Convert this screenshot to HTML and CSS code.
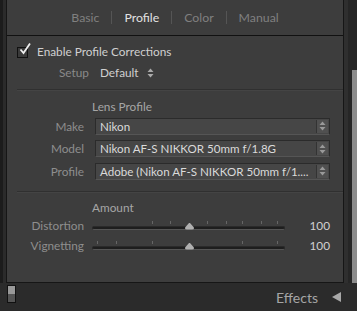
FILE: index.html
```html
<!DOCTYPE html>
<html>
<head>
  <meta charset="UTF-8">
  <title>Lens Corrections</title>
  <link rel="stylesheet" href="styles.css">
</head>
<body>
  <div class="frame">
    <div class="edge"></div>
    <div class="panel">
      <div class="tabs">
        <span class="tab">Basic</span><span class="sep"></span>
        <span class="tab active">Profile</span><span class="sep"></span>
        <span class="tab">Color</span><span class="sep"></span>
        <span class="tab">Manual</span>
      </div>

      <div class="body">
        <label class="check-row">
          <span class="checkbox">
            <svg width="14" height="14" viewBox="0 0 14 14"><path d="M2.5 7.5 L5.5 11 L12 1.5" fill="none" stroke="#eee" stroke-width="1.8"/></svg>
          </span>
          Enable Profile Corrections
        </label>

        <div class="setup-row">
          <span class="dim">Setup</span>
          <span class="setup-value">Default</span>
          <svg class="updown" width="7" height="10" viewBox="0 0 7 10"><path d="M3.5 0.5 L6.5 4 L0.5 4 Z M3.5 9.5 L6.5 6 L0.5 6 Z" fill="#aaa"/></svg>
        </div>

        <div class="divider"></div>

        <!-- Lens Profile -->
        <div class="group-title">Lens Profile</div>
        <div class="field">
          <span class="label">Make</span>
          <div class="select"><span class="select-text">Nikon</span><span class="stepper"><svg width="7" height="10" viewBox="0 0 7 10"><path d="M3.5 0.5 L6.5 4 L0.5 4 Z M3.5 9.5 L6.5 6 L0.5 6 Z" fill="#999"/></svg></span></div>
        </div>
        <div class="field">
          <span class="label">Model</span>
          <div class="select"><span class="select-text">Nikon AF-S NIKKOR 50mm f/1.8G</span><span class="stepper"><svg width="7" height="10" viewBox="0 0 7 10"><path d="M3.5 0.5 L6.5 4 L0.5 4 Z M3.5 9.5 L6.5 6 L0.5 6 Z" fill="#999"/></svg></span></div>
        </div>
        <div class="field">
          <span class="label">Profile</span>
          <div class="select"><span class="select-text">Adobe (Nikon AF-S NIKKOR 50mm f/1....</span><span class="stepper"><svg width="7" height="10" viewBox="0 0 7 10"><path d="M3.5 0.5 L6.5 4 L0.5 4 Z M3.5 9.5 L6.5 6 L0.5 6 Z" fill="#999"/></svg></span></div>
        </div>

        <div class="divider lower"></div>

        <!-- Amount -->
        <div class="group-title amount">Amount</div>
        <div class="slider-row">
          <span class="label">Distortion</span>
          <div class="slider">
            <span class="tick" style="left: 60px"></span>
            <span class="tick" style="left: 78px"></span>
            <span class="tick" style="left: 115px"></span>
            <span class="tick" style="left: 134px"></span>
            <span class="tick" style="left: 150px"></span>
            <span class="tick" style="left: 169px"></span>
            <span class="tick" style="left: 185px"></span>
            <div class="track"></div>
            <span class="thumb" style="left: 93px"></span>
          </div>
          <span class="value">100</span>
        </div>
        <div class="slider-row">
          <span class="label">Vignetting</span>
          <div class="slider">
            <span class="tick" style="left: 5px"></span>
            <span class="tick" style="left: 24px"></span>
            <span class="tick" style="left: 60px"></span>
            <span class="tick" style="left: 150px"></span>
            <span class="tick" style="left: 185px"></span>
            <div class="track"></div>
            <span class="thumb" style="left: 93px"></span>
          </div>
          <span class="value">100</span>
        </div>
      </div>
    </div>
    <div class="gutter">
      <div class="scrollbar"></div>
    </div>
  </div>

  <div class="footer">
    <span class="toggle"><span class="toggle-top"></span><span class="toggle-bottom"></span></span>
    <span class="footer-title">Effects</span>
    <svg class="collapse" width="9" height="10" viewBox="0 0 9 10"><path d="M0 5 L9 0 L9 10 Z" fill="#a8a8a8"/></svg>
  </div>
</body>
</html>
```

FILE: styles.css
```css
body { margin: 0; width: 357px; height: 311px; overflow: hidden; background: #2b2b2b; font-family: Lato, "Liberation Sans", sans-serif; font-size: 11.8px; color: #c8c8c8; }
.frame { display: flex; height: 283px; }
.edge { width: 3px; background: #1c1c1c; margin-right: 3px; }
.panel { width: 336px; background: #3d3d3d; border: 1px solid #161616; border-top: none; display: flex; flex-direction: column; }
.gutter { flex: 1; display: flex; justify-content: flex-end; background: #262626; border-left: 4px solid #2f2f2f; }
.scrollbar { width: 5px; margin-top: 70px; background: #8c8c8c; }

.tabs { height: 35px; border-bottom: 1px solid #111; display: flex; align-items: center; justify-content: center; padding-right: 0; }
.tab { color: #808080; font-size: 12.3px; }
.tab.active { color: #e2e2e2; }
.sep { width: 1px; height: 13px; background: #555; margin: 0 12px; }

.body { padding: 6px 0 0 10px; display: flex; flex-direction: column; }
.check-row { display: flex; align-items: center; height: 18px; color: #d0d0d0; }
.checkbox { position: relative; width: 9px; height: 9px; border: 1px solid #111; background: #3a3a3a; margin: 2px 9px 0 0; }
.checkbox svg { position: absolute; left: 0; top: -6px; }
.setup-row { display: flex; align-items: center; height: 18px; margin: 3px 0 0 42px; }
.dim { color: #8a8a8a; }
.setup-value { margin-left: 11px; color: #d0d0d0; }
.updown { margin: 1px 0 0 8px; }

.divider { height: 1px; background: #303030; border-bottom: 1px solid #444; margin: 8px 0 0 0; }
.divider.lower { margin-top: 8px; }

.group-title { margin: 7px 0 0 75px; height: 17px; line-height: 17px; color: #a6a6a6; }
.group-title.amount { margin-top: 6px; }

.field { display: flex; align-items: center; height: 22.5px; }
.field:first-of-type { margin-top: 1px; }
.label { width: 67px; text-align: right; color: #8e8e8e; }
.select { margin-left: 11px; width: 233px; height: 15px; display: flex; align-items: center; background: #464646; border: 1px solid #2b2b2b; border-bottom-color: #555; }
.select-text { flex: 1; padding-left: 4px; color: #dadada; font-size: 11.6px; white-space: nowrap; overflow: hidden; }
.stepper { width: 11px; height: 13px; margin-right: 1px; display: flex; align-items: center; justify-content: center; background: #505050; border-left: 1px solid #333; }

.slider-row { display: flex; align-items: center; height: 20px; }
.slider { position: relative; width: 193px; height: 12px; margin-left: 8px; }
.track { position: absolute; left: 0; right: 0; top: 6px; height: 2px; background: #1e1e1e; border: 1px solid #2a2a2a; border-bottom-color: #555; border-radius: 3px; }
.tick { position: absolute; top: 1px; width: 1px; height: 3px; background: #666; }
.thumb { position: absolute; top: 3px; width: 9px; height: 7px; background: #b0b0b0; clip-path: polygon(50% 0, 100% 70%, 100% 100%, 0 100%, 0 70%); border-radius: 0 0 2px 2px; }
.value { width: 45px; text-align: right; color: #d0d0d0; }

.footer { height: 28px; display: flex; align-items: center; padding: 0 16px 0 7px; }
.toggle { width: 7px; height: 16px; border: 1px solid #111; display: flex; flex-direction: column; margin-top: -6px; }
.toggle-top { flex: 1; background: #999; }
.toggle-bottom { flex: 1; background: #555; }
.footer-title { margin-left: auto; color: #a5a5a5; font-size: 14px; }
.collapse { margin-left: 14px; }
```
